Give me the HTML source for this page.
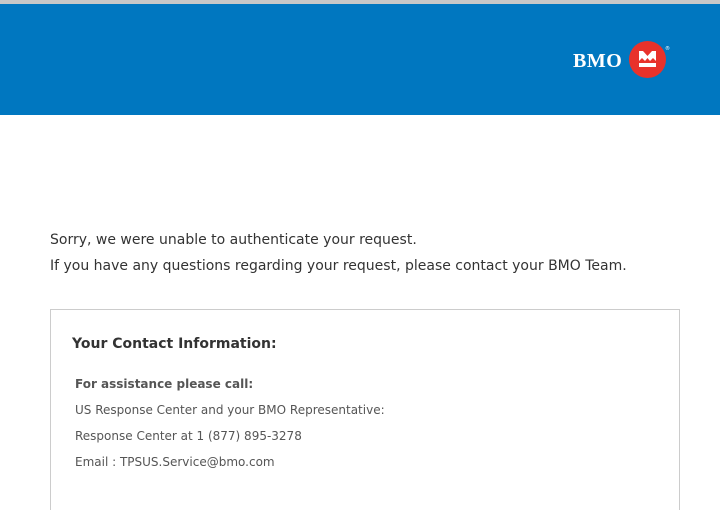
<!DOCTYPE html>
<html><head><style>
body{margin:0;width:720px;height:480px;overflow:hidden;background:#fff;font-family:"DejaVu Sans",sans-serif;color:#333}
.top{height:4px;background:#c8c8c8}
.hdr{height:111px;background:#0077c0;position:relative}
.logo{position:absolute;left:573px;top:46px;color:#fff;font-family:"Liberation Serif",serif;font-weight:bold;font-size:20px;letter-spacing:0.5px}
.circ{position:absolute;left:629px;top:37px;width:37px;height:37px;border-radius:50%;background:#e8322b}
.p{position:absolute;left:50px;font-size:14px;color:#333}
.box{position:absolute;left:50px;top:309px;width:628px;height:200px;border:1px solid #ccc;border-bottom:none}
.h{position:absolute;left:21px;top:26px;font-weight:bold;font-size:14px;color:#333}
.s{position:absolute;left:24px;font-size:12px;color:#555}
</style></head><body>
<div class="top"></div>
<div class="hdr">
<div class="logo">BMO</div>
<div class="circ"><svg width="37" height="37" viewBox="0 0 37 37"><path d="M10 20 L10 10 L14 10 L18.5 15 L23 10 L27 10 L27 20 L24 17 L21 20 L18.5 17 L16 20 L13 17Z" fill="#fff"/><rect x="10" y="22" width="17" height="4" fill="#fff"/></svg></div>
<div style="position:absolute;left:665px;top:42px;color:#fff;font-size:5px">®</div>
</div>
<div class="p" style="top:232px">Sorry, we were unable to authenticate your request.</div>
<div class="p" style="top:258px">If you have any questions regarding your request, please contact your BMO Team.</div>
<div class="box">
<div class="h">Your Contact Information:</div>
<div class="s" style="top:67px;font-weight:bold">For assistance please call:</div>
<div class="s" style="top:93px">US Response Center and your BMO Representative:</div>
<div class="s" style="top:119px">Response Center at 1 (877) 895-3278</div>
<div class="s" style="top:145px">Email : TPSUS.Service@bmo.com</div>
</div>
</body></html>
